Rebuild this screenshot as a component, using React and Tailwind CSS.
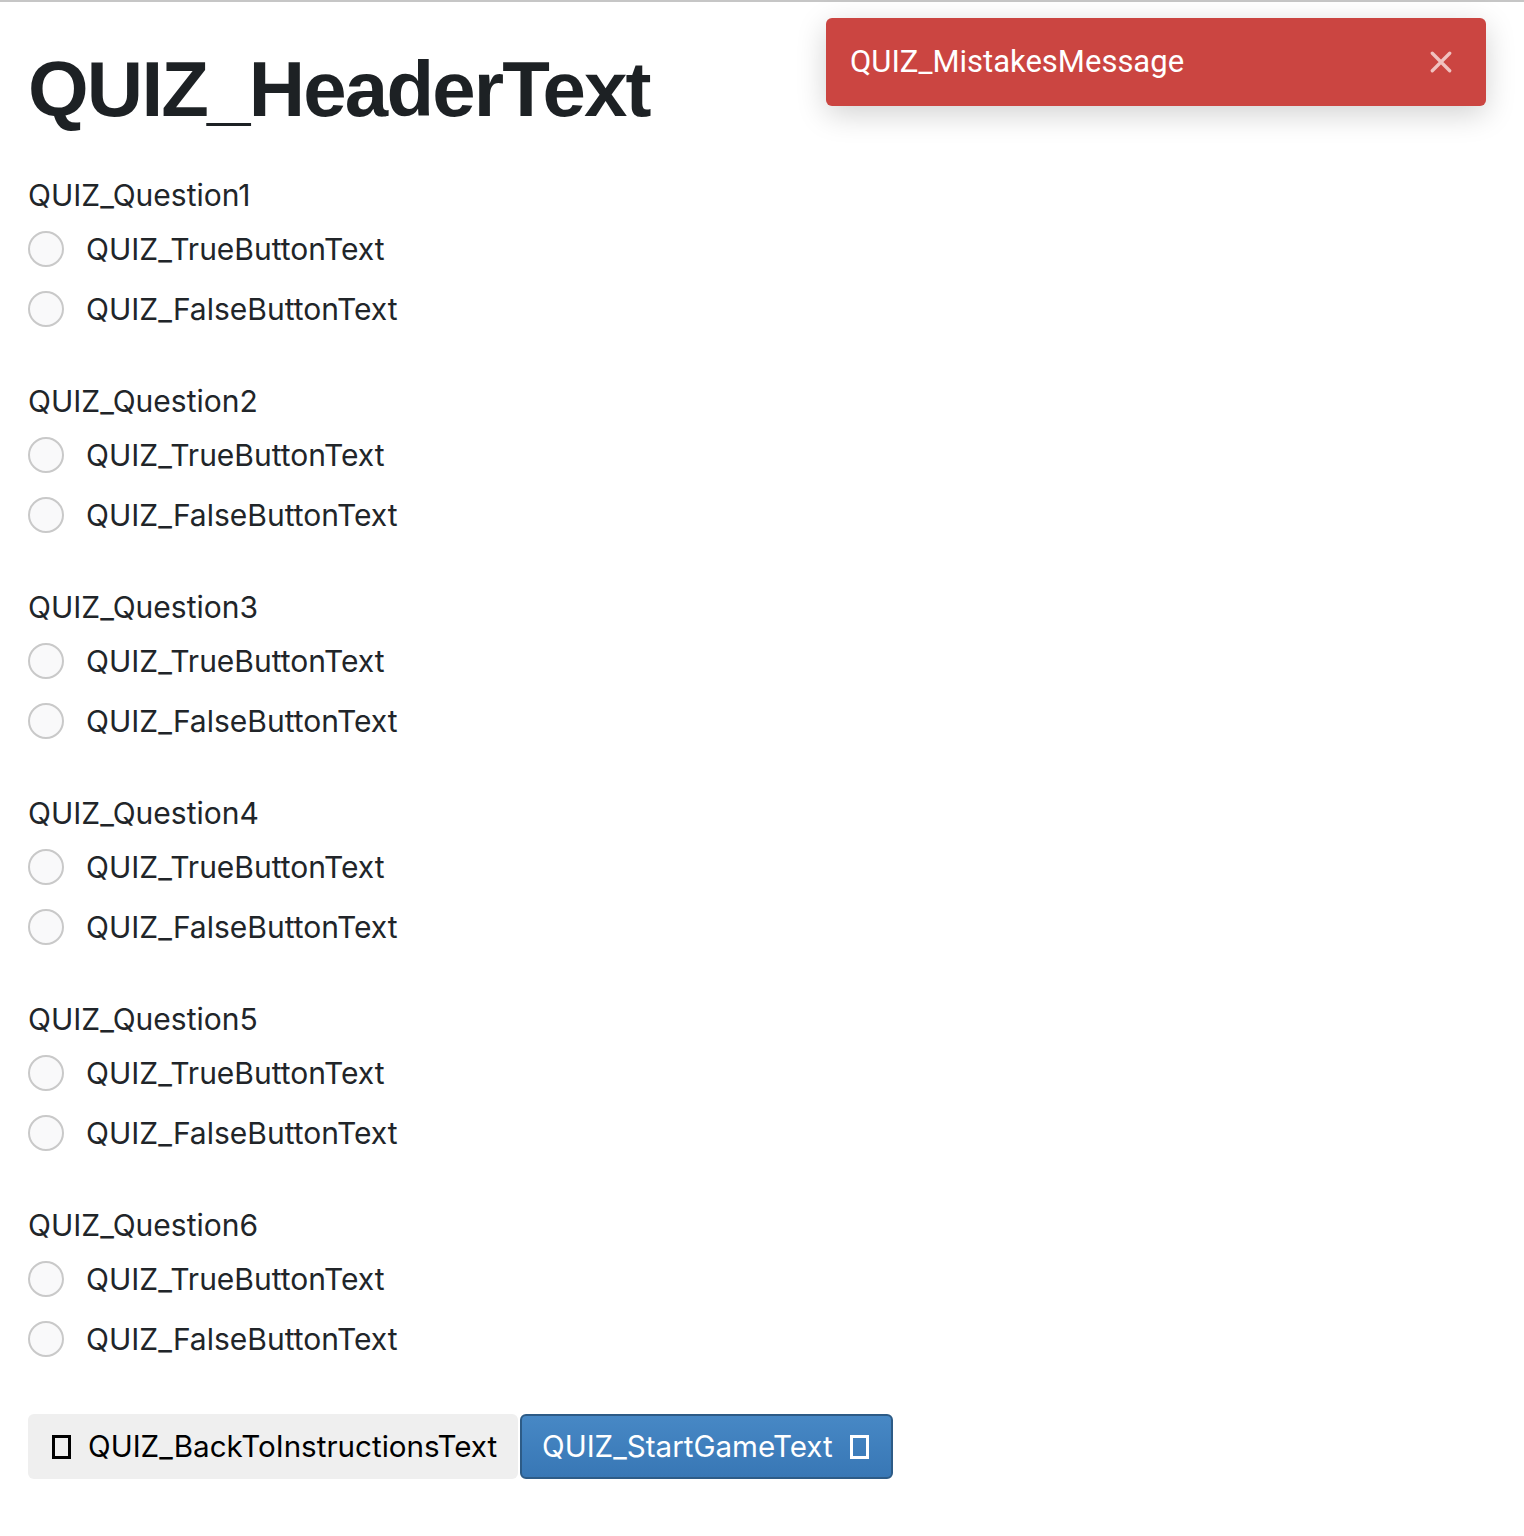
import React from "react";

function Radio({ label }) {
  return (
    <label className="flex items-center h-[60px]">
      <span className="w-[36px] h-[36px] rounded-full border-2 border-[#c9c9c9] bg-[#f9f9fa] shrink-0" />
      <span className="ml-[22px] text-[30px] text-[#212529] leading-none">{label}</span>
    </label>
  );
}

function Question({ n }) {
  return (
    <div className="mb-[50px]">
      <div className="text-[30px] text-[#212529] leading-none h-[24px] flex items-center">QUIZ_Question{n}</div>
      <div className="mt-[12px] flex flex-col">
        <Radio label="QUIZ_TrueButtonText" />
        <Radio label="QUIZ_FalseButtonText" />
      </div>
    </div>
  );
}

function Tofu({ light }) {
  return (
    <span className={`inline-block w-[19px] h-[24px] border-[3px] ${light ? "border-white" : "border-black"}`} />
  );
}

export default function App() {
  return (
    <div className="min-h-[1536px] bg-white relative border-t-2 border-[#c6c6c6]" style={{ fontFamily: "Inter, 'Noto Sans', sans-serif" }}>
      <div className="pl-[28px] pt-[48px]">
        <h1 className="text-[78px] font-bold text-[#1d2124] leading-none tracking-[-1.8px]" style={{ fontFamily: "'Liberation Sans', Arial, sans-serif" }}>
          QUIZ_HeaderText
        </h1>
        <div className="mt-[55px]">
          {[1, 2, 3, 4, 5, 6].map((n) => (
            <Question key={n} n={n} />
          ))}
        </div>
        <div className="flex -mt-[5px]">
          <button className="h-[65px] w-[490px] bg-[#efefef] rounded-[6px] flex items-center pl-[24px] text-[29.6px] text-black gap-[17px]">
            <Tofu />
            <span>QUIZ_BackToInstructionsText</span>
          </button>
          <button className="ml-[2px] h-[65px] w-[373px] bg-gradient-to-b from-[#4788c5] to-[#3877b5] border-2 border-[#2d5b86] rounded-[6px] flex items-center pl-[20px] text-[29.6px] text-white gap-[17px]">
            <span>QUIZ_StartGameText</span>
            <Tofu light />
          </button>
        </div>
      </div>
      <div className="absolute left-[826px] top-[16px] w-[660px] h-[88px] bg-[#cb4541] rounded-[6px] shadow-[0_8px_30px_rgba(0,0,0,0.18)] flex items-center pl-[24px] pr-[34px]" style={{ fontFamily: "Roboto, sans-serif" }}>
        <span className="text-[31px] text-white flex-1">QUIZ_MistakesMessage</span>
        <svg width="22" height="22" viewBox="0 0 24 24">
          <path d="M2.5 2.5 L21.5 21.5 M21.5 2.5 L2.5 21.5" stroke="#f0c2c0" strokeWidth="3.6" strokeLinecap="round" />
        </svg>
      </div>
    </div>
  );
}
